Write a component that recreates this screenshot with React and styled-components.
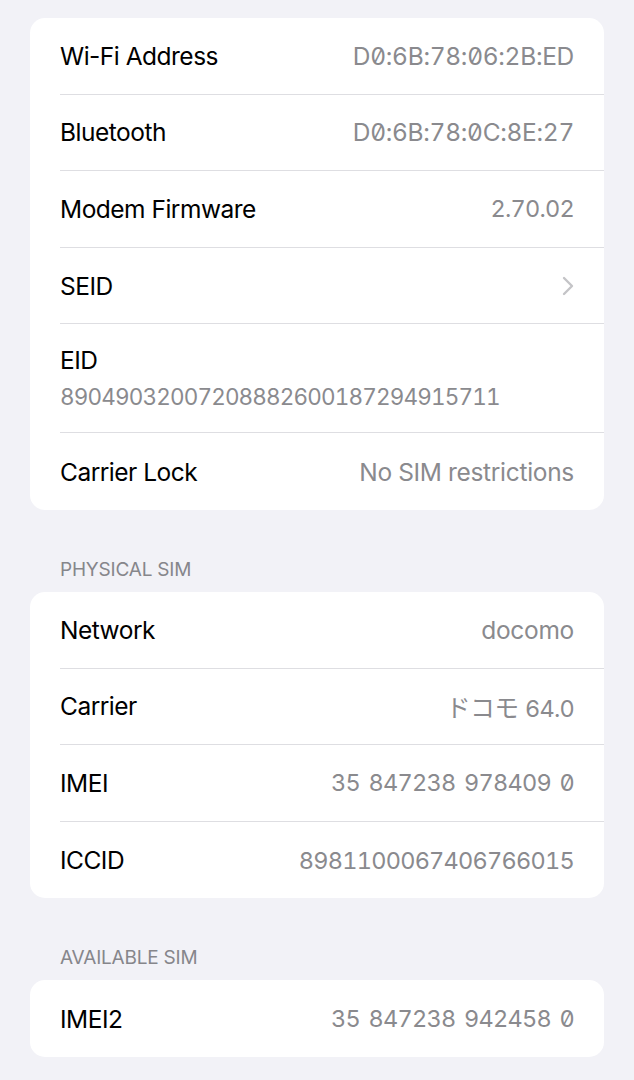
import styled, { createGlobalStyle } from "styled-components";

const GlobalStyle = createGlobalStyle`
  html, body {
    margin: 0;
    padding: 0;
    background: #f2f2f7;
  }
  body {
    font-family: Inter, "Noto Sans", "Noto Sans CJK JP", sans-serif;
    -webkit-font-smoothing: antialiased;
  }
`;

const Page = styled.div`
  width: 634px;
  height: 1080px;
  overflow: hidden;
  box-sizing: border-box;
  padding: 18px 30px 0;
  background: #f2f2f7;
`;

const Card = styled.div`
  background: #fff;
  border-radius: 15px;
  overflow: hidden;
`;

const SectionHeader = styled.div`
  padding: 48px 0 10px 30px;
  font-size: 19px;
  line-height: 24px;
  color: #86868b;
  letter-spacing: -0.2px;
`;

const Row = styled.div`
  padding-left: 30px;
`;

const RowInner = styled.div`
  height: ${(p) => (p.$tall ? "109px" : "76.6px")};
  box-sizing: border-box;
  padding-right: 30px;
  border-bottom: ${(p) => (p.$last ? "none" : "1px solid #dedee2")};
  display: flex;
  flex-direction: ${(p) => (p.$tall ? "column" : "row")};
  align-items: ${(p) => (p.$tall ? "flex-start" : "center")};
  justify-content: ${(p) => (p.$tall ? "flex-start" : "space-between")};
  padding-top: ${(p) => (p.$tall ? "21px" : "0")};
`;

const Label = styled.span`
  font-size: 24.5px;
  letter-spacing: -0.5px;
  color: #000;
`;

const Value = styled.span`
  font-size: ${(p) => (p.$num ? "23.5px" : "24.5px")};
  letter-spacing: ${(p) => (p.$num ? "-0.75px" : "-0.3px")};
  word-spacing: ${(p) => (p.$num ? "3px" : "0")};
  color: #8a8a8e;
  font-feature-settings: "tnum" 1;
  white-space: nowrap;
`;

const SubValue = styled(Value)`
  margin-top: 8px;
  font-size: 22.5px;
  letter-spacing: -0.85px;
`;

const Slashed = styled.span`
  font-feature-settings: "tnum" 1, "zero" 1;
`;

const Chevron = () => (
  <svg width="12" height="20" viewBox="0 0 12 20" fill="none">
    <path
      d="M2 2l8 8-8 8"
      stroke="#c4c4c7"
      strokeWidth="2.4"
      strokeLinecap="round"
      strokeLinejoin="round"
    />
  </svg>
);

const withSlash = (text) =>
  text.split("0").map((part, i, arr) => (
    <span key={i}>
      {part}
      {i < arr.length - 1 && <Slashed>0</Slashed>}
    </span>
  ));

const InfoRow = ({ label, value, num, last, children }) => (
  <Row>
    <RowInner $last={last}>
      <Label>{label}</Label>
      {children || <Value $num={num}>{value}</Value>}
    </RowInner>
  </Row>
);

const App = () => (
  <>
    <GlobalStyle />
    <Page>
      <Card>
        <InfoRow label="Wi-Fi Address">
          <Value>{withSlash("D0:6B:78:06:2B:ED")}</Value>
        </InfoRow>
        <InfoRow label="Bluetooth">
          <Value>{withSlash("D0:6B:78:0C:8E:27")}</Value>
        </InfoRow>
        <InfoRow label="Modem Firmware" value="2.70.02" num />
        <InfoRow label="SEID">
          <Chevron />
        </InfoRow>
        <Row>
          <RowInner $tall>
            <Label>EID</Label>
            <SubValue>89049032007208882600187294915711</SubValue>
          </RowInner>
        </Row>
        <InfoRow label="Carrier Lock" value="No SIM restrictions" last />
      </Card>

      <SectionHeader>PHYSICAL SIM</SectionHeader>
      <Card>
        <InfoRow label="Network" value="docomo" />
        <InfoRow label="Carrier">
          <Value>
            ドコモ <Value $num>64.0</Value>
          </Value>
        </InfoRow>
        <InfoRow label="IMEI">
          <Value $num>
            35 847238 978409 <Slashed>0</Slashed>
          </Value>
        </InfoRow>
        <InfoRow label="ICCID" value="8981100067406766015" num last />
      </Card>

      <SectionHeader>AVAILABLE SIM</SectionHeader>
      <Card>
        <InfoRow label="IMEI2" last>
          <Value $num>
            35 847238 942458 <Slashed>0</Slashed>
          </Value>
        </InfoRow>
      </Card>
    </Page>
  </>
);

export default App;
